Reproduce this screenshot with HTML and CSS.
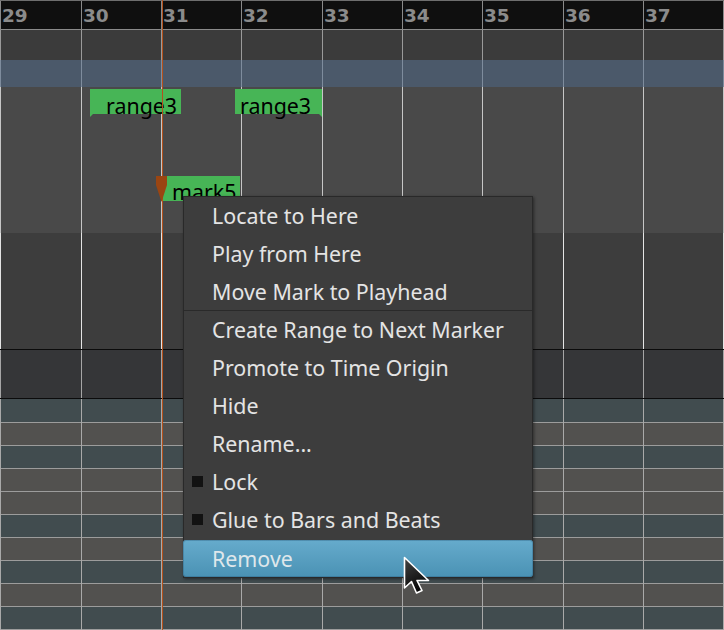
FILE: index.html
```html
<!DOCTYPE html>
<html>
<head>
<meta charset="utf-8">
<link rel="stylesheet" href="styles.css">
</head>
<body>
<div class="editor">
  <div class="ruler">
    <span>29</span><span>30</span><span>31</span><span>32</span><span>33</span><span>34</span><span>35</span><span>36</span><span>37</span><span></span>
  </div>
  <div class="band band-top"></div>
  <div class="band band-range"></div>
  <div class="band band-markers"></div>
  <div class="band band-lower"></div>
  <div class="band band-bus"></div>
  <div class="tracks">
    <div class="row teal"></div>
    <div class="row grey"></div>
    <div class="row teal"></div>
    <div class="row grey"></div>
    <div class="row grey"></div>
    <div class="row teal"></div>
    <div class="row grey"></div>
    <div class="row teal"></div>
    <div class="row grey"></div>
    <div class="row teal"></div>
  </div>

  <div class="vline" style="left:0px"></div>
  <div class="vline" style="left:81px"></div>
  <div class="vline" style="left:161px"></div>
  <div class="vline" style="left:241px"></div>
  <div class="vline" style="left:322px"></div>
  <div class="vline" style="left:402px"></div>
  <div class="vline" style="left:482px"></div>
  <div class="vline" style="left:563px"></div>
  <div class="vline" style="left:643px"></div>
  <div class="vline" style="left:723px"></div>

  <div class="range range-start" style="left:90px;width:91px"><span class="label">range3</span></div>
  <div class="range range-end" style="left:235px;width:87px"><span class="label">range3</span></div>
  <div class="mark" style="left:161px;width:79px"><span class="label">mark5</span></div>

  <div class="playhead"></div>

  <svg class="mark-pin" width="11" height="27" viewBox="0 0 11 27">
    <polygon points="0,0 11,0 11,9 5.5,26 0,9" fill="#9a4512"/>
  </svg>

  <div class="menu">
    <div class="item">Locate to Here</div>
    <div class="item">Play from Here</div>
    <div class="item">Move Mark to Playhead</div>
    <div class="sep"></div>
    <div class="item">Create Range to Next Marker</div>
    <div class="item">Promote to Time Origin</div>
    <div class="item">Hide</div>
    <div class="item">Rename...</div>
    <div class="item check"><span class="box"></span>Lock</div>
    <div class="item check"><span class="box"></span>Glue to Bars and Beats</div>
    <div class="item active">Remove</div>
  </div>

  <svg class="cursor" width="30" height="40" viewBox="0 0 30 40">
    <defs>
      <linearGradient id="cg" x1="0" y1="0" x2="0.4" y2="1">
        <stop offset="0" stop-color="#444"/>
        <stop offset="1" stop-color="#050505"/>
      </linearGradient>
    </defs>
    <path d="M1.5 1.5 V32 L8.5 25.5 L13.5 37 L19 34.5 L14 24.5 L25.5 24.5 Z" fill="url(#cg)" stroke="#fff" stroke-width="1.6" stroke-linejoin="round"/>
  </svg>
</div>
</body>
</html>
```

FILE: styles.css
```css
html, body {
  margin: 0;
  padding: 0;
  background: #3d3d3d;
  overflow: hidden;
}

.editor {
  position: relative;
  width: 724px;
  height: 630px;
  overflow: hidden;
  display: flex;
  flex-direction: column;
}

.ruler {
  height: 28px;
  flex: none;
  background: #0f0f0f;
  border-top: 1px solid #6e6e6e;
  border-bottom: 1px solid #8a8a8a;
  display: grid;
  grid-template-columns: 81px 80px 80px 81px 80px 80px 81px 80px 80px 1fr;
}

.ruler span {
  font-family: "DejaVu Sans", sans-serif;
  font-weight: bold;
  font-size: 18.5px;
  line-height: 28px;
  padding-top: 1px;
  padding-left: 2px;
  color: #8b8b8b;
  box-sizing: border-box;
}

.band { flex: none; }
.band-top { height: 30px; background: #3b3b3b; }
.band-range { height: 27px; background: #4b596a; }
.band-markers { height: 146px; background: #494949; }
.band-lower { height: 116px; background: #3d3d3d; }
.band-bus {
  height: 48px;
  background: #353638;
  border-top: 1px solid #0b0b0b;
  border-bottom: 1px solid #0b0b0b;
}

.tracks { flex: 1; display: flex; flex-direction: column; }
.row {
  height: 22px;
  flex: none;
  border-bottom: 1px solid #9c9c9c;
}
.row:first-child { height: 23px; }
.row.teal { background: #414c4f; }
.row.grey { background: #52514f; }

.vline {
  position: absolute;
  top: 1px;
  bottom: 0;
  width: 1px;
  background: linear-gradient(to bottom,
    #8a8a8a 0, #8a8a8a 29px,
    #9a9a9a 29px, #9a9a9a 59px,
    #7e8c9d 59px, #7e8c9d 86px,
    #c6c6c6 86px, #c6c6c6 232px,
    #e4e4e4 232px, #e4e4e4 348px,
    #0b0b0b 348px, #0b0b0b 349px,
    #a6a6a6 349px, #a6a6a6 397px,
    #0b0b0b 397px, #0b0b0b 398px,
    #a9a9a9 398px);
}

.range, .mark {
  position: absolute;
  height: 25px;
  background: #47b556;
  box-sizing: border-box;
  font-family: "Noto Sans", sans-serif;
  font-size: 21.4px;
  line-height: 25px;
  color: #000;
  white-space: nowrap;
}
.range { top: 89px; padding-top: 4px; }
.range-start { padding-left: 16px; }
.range-end { padding-left: 5px; }
.range-start::after,
.range-end::after {
  content: "";
  position: absolute;
  bottom: -3px;
  width: 0;
  height: 0;
  border-top: 3px solid #47b556;
}
.range-start::after { left: 0; border-right: 3px solid transparent; }
.range-end::after { right: 0; border-left: 3px solid transparent; }

.mark { top: 176px; padding-top: 3px; padding-left: 11px; }

.playhead {
  position: absolute;
  left: 162px;
  top: 0;
  bottom: 0;
  width: 1px;
  background: #b4511b;
}

.mark-pin {
  position: absolute;
  left: 156px;
  top: 176px;
}

.menu {
  position: absolute;
  left: 183px;
  top: 196px;
  width: 350px;
  height: 382px;
  box-sizing: border-box;
  background: #3d3d3d;
  border: 1px solid #292929;
  box-shadow: 1px 1px 3px rgba(0, 0, 0, 0.45);
  display: flex;
  flex-direction: column;
  font-family: "Noto Sans", sans-serif;
  font-size: 21.4px;
  color: #e4e4e4;
}

.item {
  height: 38px;
  flex: none;
  line-height: 38px;
  padding-left: 28px;
  position: relative;
  white-space: nowrap;
}

.sep {
  height: 1px;
  flex: none;
  margin-top: -1px;
  background: #2a2a2a;
}

.check .box {
  position: absolute;
  left: 8px;
  top: 13px;
  width: 11px;
  height: 11px;
  background: #121212;
}

.item.active {
  height: 37px;
  line-height: 37px;
  margin: 1px -1px -1px;
  padding-left: 29px;
  border-radius: 3px;
  background: linear-gradient(to bottom, #66abcc, #4a92b4);
  box-shadow: inset 0 0 0 1px rgba(40, 90, 120, 0.35);
  color: #dfe7eb;
}

.cursor {
  position: absolute;
  left: 402.5px;
  top: 555.5px;
}
```
